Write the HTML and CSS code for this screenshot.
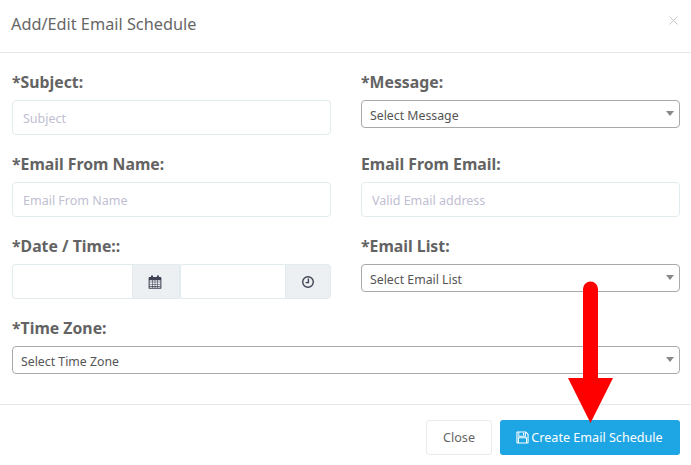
FILE: index.html
```html
<!DOCTYPE html>
<html lang="en">
<head>
    <meta charset="UTF-8">
    <meta name="viewport" content="width=device-width, initial-scale=1.0">
    <title>Add/Edit Email Schedule</title>
    <link rel="stylesheet" href="styles.css">
</head>
<body>
    <div class="modal">
        <div class="modal-header">
            <h4 class="modal-title">Add/Edit Email Schedule</h4>
            <svg class="close-icon" width="9" height="9" viewBox="0 0 9 9"><path d="M0.5 0.5L8.5 8.5M8.5 0.5L0.5 8.5"/></svg>
        </div>

        <div class="modal-body">
            <div class="form-group">
                <label>*Subject:</label>
                <input class="form-control" type="text" placeholder="Subject">
            </div>
            <div class="form-group">
                <label>*Message:</label>
                <div class="select-box">Select Message</div>
            </div>
            <div class="form-group">
                <label>*Email From Name:</label>
                <input class="form-control" type="text" placeholder="Email From Name">
            </div>
            <div class="form-group">
                <label>Email From Email:</label>
                <input class="form-control" type="text" placeholder="Valid Email address">
            </div>
            <div class="form-group">
                <label>*Date / Time::</label>
                <div class="date-time">
                    <input class="form-control date-input" type="text">
                    <span class="addon date-addon">
                        <!-- calendar -->
                        <svg width="14" height="14" viewBox="0 0 14 14"><path class="icon-fill" fill-rule="evenodd" d="M1.5 2H3V1.2a1 1 0 0 1 2 0V2h4V1.2a1 1 0 0 1 2 0V2h1.5a.9.9 0 0 1 .9.9v10a.9.9 0 0 1-.9.9h-11a.9.9 0 0 1-.9-.9v-10a.9.9 0 0 1 .9-.9zM1.6 5.2v1.5h2.4V5.2zM4.6 5.2v1.5h2.1V5.2zM7.3 5.2v1.5h2.1V5.2zM10 5.2v1.5h2.4V5.2zM1.6 7.3v1.6h2.4V7.3zM4.6 7.3v1.6h2.1V7.3zM7.3 7.3v1.6h2.1V7.3zM10 7.3v1.6h2.4V7.3zM1.6 9.5v1.6h2.4V9.5zM4.6 9.5v1.6h2.1V9.5zM7.3 9.5v1.6h2.1V9.5zM10 9.5v1.6h2.4V9.5zM1.6 11.7v1h2.4v-1zM4.6 11.7v1h2.1v-1zM7.3 11.7v1h2.1v-1zM10 11.7v1h2.4v-1z"/></svg>
                    </span>
                    <input class="form-control time-input" type="text">
                    <span class="addon time-addon">
                        <!-- clock -->
                        <svg width="14" height="14" viewBox="0 0 14 14"><circle class="icon-line" cx="7" cy="7" r="5.3"/><path class="icon-line" d="M7.4 3.6V7.6H4.6"/></svg>
                    </span>
                </div>
            </div>
            <div class="form-group">
                <label>*Email List:</label>
                <div class="select-box">Select Email List</div>
            </div>
            <div class="form-group full">
                <label>*Time Zone:</label>
                <div class="select-box">Select Time Zone</div>
            </div>
        </div>

        <div class="modal-footer">
            <button class="btn btn-close">Close</button>
            <button class="btn btn-create">
                <svg width="13" height="13" viewBox="0 0 13 13"><path fill="#fff" fill-rule="evenodd" d="M1.2 0.4H10L12.6 3V11.6a1 1 0 0 1-1 1H1.4a1 1 0 0 1-1-1V1.4a1 1 0 0 1 .8-1zM3.3 1.5V4.8H9V1.5zM7 2h1.2v2.2H7zM3 7.2V11.6H10V7.2zM1.5 1.5V11.5H2V6.2H11V11.5H11.5V3.5L9.9 1.7V5.8H2.4V1.5z"/></svg>
                Create Email Schedule
            </button>
        </div>
    </div>

    <!-- annotation arrow on top of the screenshot -->
    <svg class="arrow" width="691" height="465" viewBox="0 0 691 465">
        <path d="M590.5 289V380" stroke="#ff0000" stroke-width="15" stroke-linecap="round"/>
        <path d="M568 378H613L590.5 423Z" fill="#ff0000"/>
    </svg>
</body>
</html>
```

FILE: styles.css
```css
html, body {
    margin: 0;
    padding: 0;
    background-color: #ffffff;
}

body {
    font-family: 'Noto Sans', sans-serif;
    color: #636363;
    overflow: hidden;
}

.modal {
    width: 691px;
    height: 465px;
    position: relative;
}

.modal-header {
    height: 53px;
    box-sizing: border-box;
    border-bottom: 1px solid #e5e8ea;
    display: flex;
    justify-content: space-between;
    align-items: center;
    padding: 0 13px 5px 11px;
}

.modal-title {
    margin: 0;
    font-size: 16.3px;
    font-weight: 400;
    color: #666666;
}

.close-icon {
    margin-top: -6px;
}

.close-icon path {
    stroke: #c9c9c9;
    stroke-width: 1;
    fill: none;
}

.modal-body {
    display: grid;
    grid-template-columns: 319px 319px;
    column-gap: 30px;
    padding: 19px 11px 11px 12px;
    height: 351px;
    box-sizing: border-box;
    align-content: start;
}

.form-group {
    margin-bottom: 19px;
    height: 63px;
}

.form-group:last-child {
    height: auto;
}

.full {
    grid-column: 1 / 3;
}

label {
    display: block;
    font-size: 15.8px;
    line-height: 20px;
    font-weight: 700;
    color: #636363;
    margin-bottom: 8px;
}

.form-control {
    display: block;
    width: 100%;
    height: 35px;
    box-sizing: border-box;
    border: 1px solid #e2ebee;
    border-radius: 4px;
    padding: 2px 10px 0;
    font-family: inherit;
    font-size: 12.5px;
    color: #555555;
    outline: none;
}

.form-control::placeholder {
    color: #bfc0d2;
    opacity: 1;
}

.select-box {
    position: relative;
    height: 28px;
    box-sizing: border-box;
    border: 1px solid #aaaaaa;
    border-radius: 4px;
    padding: 1px 0 0 8px;
    font-size: 12.3px;
    line-height: 28px;
    color: #555555;
}

.select-box::after {
    content: "";
    position: absolute;
    right: 5px;
    top: 10px;
    border-left: 4px solid transparent;
    border-right: 4px solid transparent;
    border-top: 5px solid #888888;
}

.date-time {
    display: flex;
    height: 35px;
}

.date-input {
    width: 120px;
    border-radius: 4px 0 0 4px;
    border-right: none;
}

.time-input {
    width: 105px;
    border-radius: 3px 0 0 3px;
    border-right: none;
}

.addon {
    display: flex;
    justify-content: center;
    align-items: center;
    box-sizing: border-box;
    background-color: #edf0f2;
    border: 1px solid #e2ebee;
}

.date-addon {
    width: 48px;
    padding-right: 2px;
}

.time-addon {
    width: 46px;
    border-radius: 0 4px 4px 0;
}

.icon-fill {
    fill: #3f4254;
}

.icon-line {
    fill: none;
    stroke: #3f4254;
    stroke-width: 1.4;
}

.modal-footer {
    display: flex;
    justify-content: flex-end;
    gap: 8px;
    padding: 15px 11px 0 0;
    border-top: 1px solid #e5e8ea;
}

.btn {
    height: 35px;
    box-sizing: border-box;
    border-radius: 3px;
    font-family: inherit;
    font-size: 12.6px;
}

.btn-close {
    width: 66px;
    background-color: #ffffff;
    border: 1px solid #e9ebec;
    color: #666666;
}

.btn-create {
    width: 180px;
    background-color: #1ea5e3;
    border: none;
    color: #ffffff;
    display: flex;
    justify-content: center;
    align-items: center;
    gap: 2px;
    padding: 0 1px 0 0;
}

.arrow {
    position: absolute;
    left: 0;
    top: 0;
    pointer-events: none;
}
```
